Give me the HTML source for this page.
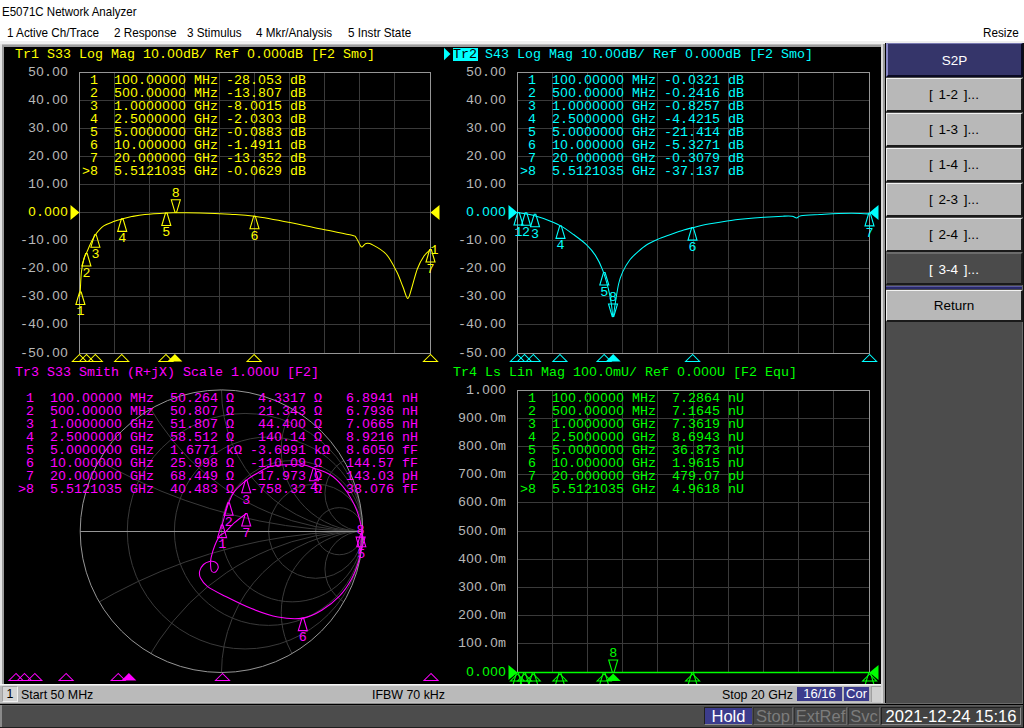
<!DOCTYPE html>
<html><head><meta charset="utf-8"><style>
*{margin:0;padding:0;box-sizing:border-box}
html,body{width:1024px;height:728px;overflow:hidden;background:#ffffff;position:relative;font-family:'Liberation Sans',sans-serif}
.abs{position:absolute}
.ui{position:absolute;white-space:pre;color:#000;transform-origin:0 0}
#chart{left:4px;top:47px;width:877px;height:637px;background:#000}
#svg{position:absolute;left:0;top:0}
svg text{font-family:'Liberation Mono',monospace;font-size:13.33px;}
.btn{position:absolute;left:886px;width:137px;text-align:center;font-size:13.5px;word-spacing:2px}
.btn.nav{background:#35356a;color:#fff;border-top:1px solid #7878b0;border-left:2px solid #8888c8;border-bottom:2px solid #0a0a22;border-right:2px solid #0a0a22}
.btn.lt{background:#b8b8b8;color:#000;border-top:1px solid #f2f2f2;border-left:1px solid #f2f2f2;border-bottom:2px solid #1a1a1a;border-right:2px solid #1a1a1a}
.btn.dk{background:#4b4b4b;color:#fff;border-top:2px solid #6c6c6c;border-left:1px solid #6c6c6c;border-bottom:2px solid #1a1a1a;border-right:2px solid #1a1a1a}
.sb{position:absolute;font-size:12.4px;color:#000;white-space:pre;line-height:14px}
.box{position:absolute;text-align:center;color:#fff;white-space:pre}
</style></head><body>
<div class="ui" style="left:2px;top:5px;font-size:12.4px;transform:scaleX(0.93)">E5071C Network Analyzer</div>
<div class="ui" style="left:7px;top:26px;font-size:12.6px;transform:scaleX(0.93)">1 Active Ch/Trace</div>
<div class="ui" style="left:114px;top:26px;font-size:12.6px;transform:scaleX(0.93)">2 Response</div>
<div class="ui" style="left:187px;top:26px;font-size:12.6px;transform:scaleX(0.93)">3 Stimulus</div>
<div class="ui" style="left:256px;top:26px;font-size:12.6px;transform:scaleX(0.93)">4 Mkr/Analysis</div>
<div class="ui" style="left:348px;top:26px;font-size:12.6px;transform:scaleX(0.93)">5 Instr State</div>
<div class="ui" style="left:983px;top:26px;font-size:12.6px;transform:scaleX(0.93)">Resize</div>
<div class="abs" style="left:0px;top:41px;width:1024px;height:3px;background:#efefef;"></div><div class="abs" style="left:0px;top:44px;width:886px;height:1px;background:#bdbdbd;"></div><div class="abs" style="left:0px;top:45px;width:886px;height:2px;background:#9c9c9c;"></div><div class="abs" style="left:0px;top:44px;width:2px;height:641px;background:#e4e4e4;"></div><div class="abs" style="left:2px;top:45px;width:2px;height:639px;background:#9c9c9c;"></div><div class="abs" style="left:881px;top:44px;width:2px;height:660px;background:#d8d8d8;"></div><div class="abs" style="left:883px;top:44px;width:2px;height:660px;background:#9a9a9a;"></div><div class="abs" style="left:885px;top:43px;width:1px;height:661px;background:#000000;"></div>
<div id="chart" class="abs"></div>
<svg id="svg" width="1024" height="728" viewBox="0 0 1024 728">
<defs><clipPath id="cc"><rect x="4" y="47" width="877" height="637"/></clipPath></defs>
<g clip-path="url(#cc)">
<path d="M114.5 72.5V353.5M149.5 72.5V353.5M184.5 72.5V353.5M219.5 72.5V353.5M254.5 72.5V353.5M289.5 72.5V353.5M324.5 72.5V353.5M359.5 72.5V353.5M394.5 72.5V353.5M79.5 100.5H430.5M79.5 128.5H430.5M79.5 156.5H430.5M79.5 184.5H430.5M79.5 212.5H430.5M79.5 240.5H430.5M79.5 268.5H430.5M79.5 296.5H430.5M79.5 324.5H430.5" stroke="#3a3a3a" stroke-width="1" fill="none"/>
<rect x="79.5" y="72.5" width="351" height="281" stroke="#969696" fill="none"/>
<text x="15" y="58" fill="#ffff00" text-anchor="start" xml:space="preserve">Tr1 S33 Log Mag 10.00dB/ Ref 0.000dB [F2 Smo]</text>
<text x="68" y="76.0" fill="#b8b8b8" text-anchor="end" >50.00</text>
<text x="68" y="104.0" fill="#b8b8b8" text-anchor="end" >40.00</text>
<text x="68" y="132.0" fill="#b8b8b8" text-anchor="end" >30.00</text>
<text x="68" y="160.0" fill="#b8b8b8" text-anchor="end" >20.00</text>
<text x="68" y="188.0" fill="#b8b8b8" text-anchor="end" >10.00</text>
<text x="68" y="216.0" fill="#ffff00" text-anchor="end" >0.000</text>
<text x="68" y="244.0" fill="#b8b8b8" text-anchor="end" >-10.00</text>
<text x="68" y="272.0" fill="#b8b8b8" text-anchor="end" >-20.00</text>
<text x="68" y="300.0" fill="#b8b8b8" text-anchor="end" >-30.00</text>
<text x="68" y="328.0" fill="#b8b8b8" text-anchor="end" >-40.00</text>
<text x="68" y="357.0" fill="#b8b8b8" text-anchor="end" >-50.00</text>
<path d="M70.5 205.0L79.5 212.5L70.5 220.0Z" fill="#ffff00"/>
<path d="M439.5 205.0L430.5 212.5L439.5 220.0Z" fill="#ffff00"/>
<text x="82" y="84" fill="#ffff00" text-anchor="start" xml:space="preserve"> 1  100.00000 MHz -28.053 dB</text>
<text x="82" y="97" fill="#ffff00" text-anchor="start" xml:space="preserve"> 2  500.00000 MHz -13.807 dB</text>
<text x="82" y="110" fill="#ffff00" text-anchor="start" xml:space="preserve"> 3  1.0000000 GHz -8.0015 dB</text>
<text x="82" y="123" fill="#ffff00" text-anchor="start" xml:space="preserve"> 4  2.5000000 GHz -2.0303 dB</text>
<text x="82" y="136" fill="#ffff00" text-anchor="start" xml:space="preserve"> 5  5.0000000 GHz -0.0883 dB</text>
<text x="82" y="149" fill="#ffff00" text-anchor="start" xml:space="preserve"> 6  10.000000 GHz -1.4911 dB</text>
<text x="82" y="162" fill="#ffff00" text-anchor="start" xml:space="preserve"> 7  20.000000 GHz -13.352 dB</text>
<text x="82" y="175" fill="#ffff00" text-anchor="start" xml:space="preserve">&gt;8  5.5121035 GHz -0.0629 dB</text>
<path d="M79.50 296.00C79.62 295.33 79.88 296.00 80.20 292.00C80.52 288.00 80.78 277.55 81.40 272.00C82.02 266.45 83.07 261.83 83.90 258.70C84.73 255.57 85.30 255.68 86.40 253.20C87.50 250.72 89.00 246.88 90.50 243.80C92.00 240.72 93.20 237.68 95.40 234.70C97.60 231.72 100.53 228.13 103.70 225.90C106.87 223.67 111.32 222.47 114.40 221.30C117.48 220.13 119.32 219.68 122.20 218.90C125.08 218.12 127.92 217.33 131.70 216.60C135.48 215.87 139.13 215.10 144.90 214.50C150.67 213.90 161.08 213.28 166.30 213.00C171.52 212.72 170.58 212.82 176.20 212.80C181.82 212.78 191.03 212.67 200.00 212.90C208.97 213.13 220.92 213.65 230.00 214.20C239.08 214.75 244.50 214.82 254.50 216.20C264.50 217.58 278.50 220.27 290.00 222.50C301.50 224.73 313.17 227.47 323.50 229.60C333.83 231.73 346.58 233.98 352.00 235.30C357.42 236.62 354.67 235.88 356.00 237.50C357.33 239.12 359.00 243.42 360.00 245.00C361.00 246.58 361.00 247.25 362.00 247.00C363.00 246.75 364.33 243.92 366.00 243.50C367.67 243.08 368.67 242.75 372.00 244.50C375.33 246.25 381.92 249.53 386.00 254.00C390.08 258.47 393.67 265.80 396.50 271.30C399.33 276.80 401.12 282.47 403.00 287.00C404.88 291.53 406.30 298.50 407.80 298.50C409.30 298.50 410.40 291.97 412.00 287.00C413.60 282.03 415.40 273.87 417.40 268.70C419.40 263.53 421.82 259.20 424.00 256.00C426.18 252.80 429.42 250.58 430.50 249.50" stroke="#ffff00" fill="none" stroke-width="1.05"/>
<path d="M79.6 292.0H81.2L84.9 304.5H75.9Z" stroke="#ffff00" fill="none" stroke-width="1.1"/>
<text x="80.4" y="315.3" fill="#ffff00" text-anchor="middle" >1</text>
<path d="M85.6 253.5H87.2L90.9 266.0H81.9Z" stroke="#ffff00" fill="none" stroke-width="1.1"/>
<text x="86.4" y="276.8" fill="#ffff00" text-anchor="middle" >2</text>
<path d="M94.6 234.7H96.2L99.9 247.2H90.9Z" stroke="#ffff00" fill="none" stroke-width="1.1"/>
<text x="95.4" y="258.0" fill="#ffff00" text-anchor="middle" >3</text>
<path d="M121.4 218.9H123.0L126.7 231.4H117.7Z" stroke="#ffff00" fill="none" stroke-width="1.1"/>
<text x="122.2" y="242.20000000000002" fill="#ffff00" text-anchor="middle" >4</text>
<path d="M165.5 213.0H167.1L170.8 225.5H161.8Z" stroke="#ffff00" fill="none" stroke-width="1.1"/>
<text x="166.3" y="236.3" fill="#ffff00" text-anchor="middle" >5</text>
<path d="M253.7 216.2H255.3L259.0 228.7H250.0Z" stroke="#ffff00" fill="none" stroke-width="1.1"/>
<text x="254.5" y="239.5" fill="#ffff00" text-anchor="middle" >6</text>
<path d="M429.7 249.5H431.3L435.0 262.0H426.0Z" stroke="#ffff00" fill="none" stroke-width="1.1"/>
<text x="430.5" y="272.8" fill="#ffff00" text-anchor="middle" >7</text>
<path d="M175.0 212.3H176.6L180.3 199.8H171.3Z" stroke="#ffff00" fill="none" stroke-width="1.1"/>
<text x="175.8" y="196.8" fill="#ffff00" text-anchor="middle" >8</text>
<text x="434.5" y="254" fill="#ffff00" text-anchor="middle" >1</text>
<path d="M79.4 354.5L72.4 361.5H86.4Z" stroke="#ffff00" fill="none" stroke-width="1.05"/>
<path d="M86.5 354.5L79.5 361.5H93.5Z" stroke="#ffff00" fill="none" stroke-width="1.05"/>
<path d="M95.3 354.5L88.3 361.5H102.3Z" stroke="#ffff00" fill="none" stroke-width="1.05"/>
<path d="M121.7 354.5L114.7 361.5H128.7Z" stroke="#ffff00" fill="none" stroke-width="1.05"/>
<path d="M165.9 354.5L158.9 361.5H172.9Z" stroke="#ffff00" fill="none" stroke-width="1.05"/>
<path d="M254.1 354.5L247.1 361.5H261.1Z" stroke="#ffff00" fill="none" stroke-width="1.05"/>
<path d="M430.5 354.5L423.5 361.5H437.5Z" stroke="#ffff00" fill="none" stroke-width="1.05"/>
<path d="M174.9 354.0L167.4 361.5H182.4Z" fill="#ffff00"/>
<path d="M552.5 72.5V353.5M587.5 72.5V353.5M622.5 72.5V353.5M657.5 72.5V353.5M693.5 72.5V353.5M728.5 72.5V353.5M763.5 72.5V353.5M798.5 72.5V353.5M833.5 72.5V353.5M517.5 100.5H869.5M517.5 128.5H869.5M517.5 156.5H869.5M517.5 184.5H869.5M517.5 212.5H869.5M517.5 240.5H869.5M517.5 268.5H869.5M517.5 296.5H869.5M517.5 324.5H869.5" stroke="#3a3a3a" stroke-width="1" fill="none"/>
<rect x="517.5" y="72.5" width="352" height="281" stroke="#969696" fill="none"/>
<path d="M444 47.8L450.5 54L444 60.2Z" fill="#00ffff"/>
<rect x="453" y="48" width="25" height="13" fill="#00ffff"/>
<text x="453" y="58" fill="#000000" text-anchor="start" >Tr2</text>
<text x="485" y="58" fill="#00ffff" text-anchor="start" xml:space="preserve">S43 Log Mag 10.00dB/ Ref 0.000dB [F2 Smo]</text>
<text x="506" y="76.0" fill="#b8b8b8" text-anchor="end" >50.00</text>
<text x="506" y="104.0" fill="#b8b8b8" text-anchor="end" >40.00</text>
<text x="506" y="132.0" fill="#b8b8b8" text-anchor="end" >30.00</text>
<text x="506" y="160.0" fill="#b8b8b8" text-anchor="end" >20.00</text>
<text x="506" y="188.0" fill="#b8b8b8" text-anchor="end" >10.00</text>
<text x="506" y="216.0" fill="#00ffff" text-anchor="end" >0.000</text>
<text x="506" y="244.0" fill="#b8b8b8" text-anchor="end" >-10.00</text>
<text x="506" y="272.0" fill="#b8b8b8" text-anchor="end" >-20.00</text>
<text x="506" y="300.0" fill="#b8b8b8" text-anchor="end" >-30.00</text>
<text x="506" y="328.0" fill="#b8b8b8" text-anchor="end" >-40.00</text>
<text x="506" y="357.0" fill="#b8b8b8" text-anchor="end" >-50.00</text>
<path d="M508.5 205.0L517.5 212.5L508.5 220.0Z" fill="#00ffff"/>
<path d="M878.5 205.0L869.5 212.5L878.5 220.0Z" fill="#00ffff"/>
<text x="520" y="84" fill="#00ffff" text-anchor="start" xml:space="preserve"> 1  100.00000 MHz -0.0321 dB</text>
<text x="520" y="97" fill="#00ffff" text-anchor="start" xml:space="preserve"> 2  500.00000 MHz -0.2416 dB</text>
<text x="520" y="110" fill="#00ffff" text-anchor="start" xml:space="preserve"> 3  1.0000000 GHz -0.8257 dB</text>
<text x="520" y="123" fill="#00ffff" text-anchor="start" xml:space="preserve"> 4  2.5000000 GHz -4.4215 dB</text>
<text x="520" y="136" fill="#00ffff" text-anchor="start" xml:space="preserve"> 5  5.0000000 GHz -21.414 dB</text>
<text x="520" y="149" fill="#00ffff" text-anchor="start" xml:space="preserve"> 6  10.000000 GHz -5.3271 dB</text>
<text x="520" y="162" fill="#00ffff" text-anchor="start" xml:space="preserve"> 7  20.000000 GHz -0.3079 dB</text>
<text x="520" y="175" fill="#00ffff" text-anchor="start" xml:space="preserve">&gt;8  5.5121035 GHz -37.137 dB</text>
<path d="M517.50 212.50C520.07 212.95 528.55 214.18 532.90 215.20C537.25 216.22 539.00 216.82 543.60 218.60C548.20 220.38 555.45 223.20 560.50 225.90C565.55 228.60 569.58 231.68 573.90 234.80C578.22 237.92 582.82 241.17 586.40 244.60C589.98 248.03 592.72 251.23 595.40 255.40C598.08 259.57 600.32 263.95 602.50 269.60C604.68 275.25 607.00 283.40 608.50 289.30C610.00 295.20 610.75 300.38 611.50 305.00C612.25 309.62 612.42 317.00 613.00 317.00C613.58 317.00 614.07 310.50 615.00 305.00C615.93 299.50 617.32 289.52 618.60 284.00C619.88 278.48 620.82 275.93 622.70 271.90C624.58 267.87 627.42 263.10 629.90 259.80C632.38 256.50 634.85 254.57 637.60 252.10C640.35 249.63 643.10 247.10 646.40 245.00C649.70 242.90 653.38 241.23 657.40 239.50C661.42 237.77 666.12 236.18 670.50 234.60C674.88 233.02 680.03 231.15 683.70 230.00C687.37 228.85 688.35 228.68 692.50 227.70C696.65 226.72 702.83 225.23 708.60 224.10C714.37 222.97 720.92 221.80 727.10 220.90C733.28 220.00 739.52 219.32 745.70 218.70C751.88 218.08 758.02 217.62 764.20 217.20C770.38 216.78 778.17 216.37 782.80 216.20C787.43 216.03 789.68 215.90 792.00 216.20C794.32 216.50 795.20 218.07 796.70 218.00C798.20 217.93 797.13 216.38 801.00 215.80C804.87 215.22 813.67 214.88 819.90 214.50C826.13 214.12 831.60 213.68 838.40 213.50C845.20 213.32 855.52 213.32 860.70 213.40C865.88 213.48 868.03 213.90 869.50 214.00" stroke="#00ffff" fill="none" stroke-width="1.05"/>
<path d="M517.7 212.5H519.3L523.0 225.0H514.0Z" stroke="#00ffff" fill="none" stroke-width="1.1"/>
<text x="518.5" y="235.8" fill="#00ffff" text-anchor="middle" >1</text>
<path d="M525.2 212.8H526.8L530.5 225.3H521.5Z" stroke="#00ffff" fill="none" stroke-width="1.1"/>
<text x="526" y="236.10000000000002" fill="#00ffff" text-anchor="middle" >2</text>
<path d="M534.2 214.3H535.8L539.5 226.8H530.5Z" stroke="#00ffff" fill="none" stroke-width="1.1"/>
<text x="535" y="237.60000000000002" fill="#00ffff" text-anchor="middle" >3</text>
<path d="M559.7 225.9H561.3L565.0 238.4H556.0Z" stroke="#00ffff" fill="none" stroke-width="1.1"/>
<text x="560.5" y="249.20000000000002" fill="#00ffff" text-anchor="middle" >4</text>
<path d="M603.5 272.5H605.1L608.8 285.0H599.8Z" stroke="#00ffff" fill="none" stroke-width="1.1"/>
<text x="604.3" y="295.8" fill="#00ffff" text-anchor="middle" >5</text>
<path d="M691.7 227.6H693.3L697.0 240.1H688.0Z" stroke="#00ffff" fill="none" stroke-width="1.1"/>
<text x="692.5" y="250.9" fill="#00ffff" text-anchor="middle" >6</text>
<path d="M868.7 213.4H870.3L874.0 225.9H865.0Z" stroke="#00ffff" fill="none" stroke-width="1.1"/>
<text x="869.5" y="236.70000000000002" fill="#00ffff" text-anchor="middle" >7</text>
<path d="M612.2 316.5H613.8L617.5 304.0H608.5Z" stroke="#00ffff" fill="none" stroke-width="1.1"/>
<text x="613" y="301.0" fill="#00ffff" text-anchor="middle" >8</text>
<path d="M517.4 354.5L510.4 361.5H524.4Z" stroke="#00ffff" fill="none" stroke-width="1.05"/>
<path d="M524.5 354.5L517.5 361.5H531.5Z" stroke="#00ffff" fill="none" stroke-width="1.05"/>
<path d="M533.3 354.5L526.3 361.5H540.3Z" stroke="#00ffff" fill="none" stroke-width="1.05"/>
<path d="M559.9 354.5L552.9 361.5H566.9Z" stroke="#00ffff" fill="none" stroke-width="1.05"/>
<path d="M604.1 354.5L597.1 361.5H611.1Z" stroke="#00ffff" fill="none" stroke-width="1.05"/>
<path d="M692.6 354.5L685.6 361.5H699.6Z" stroke="#00ffff" fill="none" stroke-width="1.05"/>
<path d="M869.6 354.5L862.6 361.5H876.6Z" stroke="#00ffff" fill="none" stroke-width="1.05"/>
<path d="M613.2 354.0L605.7 361.5H620.7Z" fill="#00ffff"/>
<text x="15" y="376" fill="#ff00ff" text-anchor="start" xml:space="preserve">Tr3 S33 Smith (R+jX) Scale 1.000U [F2]</text>
<defs><clipPath id="uc"><circle cx="221.5" cy="531.2" r="141.3"/></clipPath></defs>
<g clip-path="url(#uc)" stroke="#3a3a3a" fill="none" stroke-width="1"><circle cx="245.05" cy="531.2" r="117.75"/><circle cx="268.60" cy="531.2" r="94.20"/><circle cx="292.15" cy="531.2" r="70.65"/><circle cx="315.70" cy="531.2" r="47.10"/><circle cx="339.25" cy="531.2" r="23.55"/><circle cx="362.80" cy="3.86" r="527.34"/><circle cx="362.80" cy="1058.54" r="527.34"/><circle cx="362.80" cy="286.46" r="244.74"/><circle cx="362.80" cy="775.94" r="244.74"/><circle cx="362.80" cy="389.90" r="141.30"/><circle cx="362.80" cy="672.50" r="141.30"/><circle cx="362.80" cy="449.62" r="81.58"/><circle cx="362.80" cy="612.78" r="81.58"/><circle cx="362.80" cy="493.34" r="37.86"/><circle cx="362.80" cy="569.06" r="37.86"/></g>
<circle cx="221.5" cy="531.2" r="141.3" stroke="#969696" fill="none"/>
<path d="M80.19999999999999 531.5H362.8" stroke="#969696"/>
<text x="18" y="402" fill="#ff00ff" text-anchor="start" xml:space="preserve"> 1  100.00000 MHz  50.264 Ω   4.3317 Ω   6.8941 nH</text>
<text x="18" y="415" fill="#ff00ff" text-anchor="start" xml:space="preserve"> 2  500.00000 MHz  50.807 Ω   21.343 Ω   6.7936 nH</text>
<text x="18" y="428" fill="#ff00ff" text-anchor="start" xml:space="preserve"> 3  1.0000000 GHz  51.807 Ω   44.400 Ω   7.0665 nH</text>
<text x="18" y="441" fill="#ff00ff" text-anchor="start" xml:space="preserve"> 4  2.5000000 GHz  58.512 Ω   140.14 Ω   8.9216 nH</text>
<text x="18" y="454" fill="#ff00ff" text-anchor="start" xml:space="preserve"> 5  5.0000000 GHz  1.6771 kΩ -3.6991 kΩ  8.6050 fF</text>
<text x="18" y="467" fill="#ff00ff" text-anchor="start" xml:space="preserve"> 6  10.000000 GHz  25.998 Ω  -110.09 Ω   144.57 fF</text>
<text x="18" y="480" fill="#ff00ff" text-anchor="start" xml:space="preserve"> 7  20.000000 GHz  68.449 Ω   17.973 Ω   143.03 pH</text>
<text x="18" y="493" fill="#ff00ff" text-anchor="start" xml:space="preserve">&gt;8  5.5121035 GHz  40.483 Ω  -758.32 Ω   38.076 fF</text>
<path d="M222.20 529.00C222.19 528.35 221.73 527.26 222.13 525.12C222.53 522.99 223.51 519.92 224.60 516.20C225.69 512.48 226.99 506.93 228.64 502.80C230.29 498.66 231.58 495.14 234.50 491.40C237.42 487.66 242.25 483.46 246.19 480.34C250.12 477.23 254.10 474.99 258.10 472.70C262.10 470.41 265.65 467.93 270.20 466.60C274.75 465.27 279.85 464.95 285.40 464.70C290.95 464.45 298.73 464.52 303.50 465.10C308.27 465.68 309.46 466.52 313.99 468.17C318.52 469.82 325.90 471.98 330.70 475.00C335.50 478.02 339.27 482.15 342.80 486.30C346.33 490.45 349.38 495.37 351.90 499.90C354.42 504.43 356.38 509.22 357.90 513.50C359.42 517.78 360.43 522.13 361.00 525.60C361.57 529.07 361.40 530.34 361.34 534.34C361.27 538.33 361.05 545.11 360.61 549.57C360.17 554.03 360.18 556.25 358.70 561.10C357.22 565.95 354.92 572.85 351.70 578.70C348.48 584.55 344.38 590.93 339.40 596.20C334.42 601.47 327.90 606.65 321.80 610.30C315.70 613.95 310.11 617.01 302.79 618.13C295.48 619.24 286.45 618.59 277.90 617.00C269.35 615.41 260.28 612.07 251.50 608.60C242.72 605.13 232.52 599.87 225.20 596.20C217.88 592.53 211.72 589.63 207.60 586.60C203.48 583.57 201.82 580.60 200.50 578.00C199.18 575.40 199.20 573.25 199.70 571.00C200.20 568.75 201.87 566.08 203.50 564.50C205.13 562.92 207.50 561.87 209.50 561.50C211.50 561.13 214.03 561.38 215.50 562.30C216.97 563.22 218.30 565.38 218.30 567.00C218.30 568.62 216.63 571.33 215.50 572.00C214.37 572.67 212.32 572.17 211.50 571.00C210.68 569.83 210.67 567.23 210.60 565.00C210.53 562.77 210.42 560.80 211.10 557.60C211.78 554.40 213.27 549.42 214.70 545.80C216.13 542.18 217.92 538.23 219.70 535.90C221.48 533.57 222.93 534.00 225.40 531.80C227.87 529.60 231.03 525.75 234.50 522.70C237.97 519.65 244.24 515.04 246.19 513.51" stroke="#ff00ff" fill="none" stroke-width="1.05"/>
<path d="M221.3 525.1H222.9L226.6 537.6H217.6Z" stroke="#ff00ff" fill="none" stroke-width="1.1"/>
<text x="222.13460096670718" y="548.4228406108622" fill="#ff00ff" text-anchor="middle" >1</text>
<path d="M227.8 502.8H229.4L233.1 515.3H224.1Z" stroke="#ff00ff" fill="none" stroke-width="1.1"/>
<text x="228.6447975471018" y="526.0964716145486" fill="#ff00ff" text-anchor="middle" >2</text>
<path d="M245.4 480.3H247.0L250.7 492.8H241.7Z" stroke="#ff00ff" fill="none" stroke-width="1.1"/>
<text x="246.18764869854556" y="503.64310020151294" fill="#ff00ff" text-anchor="middle" >3</text>
<path d="M313.2 468.2H314.8L318.5 480.7H309.5Z" stroke="#ff00ff" fill="none" stroke-width="1.1"/>
<text x="313.99147639064637" y="491.46525270371194" fill="#ff00ff" text-anchor="middle" >4</text>
<path d="M360.5 534.3H362.1L365.8 546.8H356.8Z" stroke="#ff00ff" fill="none" stroke-width="1.1"/>
<text x="361.3357249574748" y="557.6361819291327" fill="#ff00ff" text-anchor="middle" >5</text>
<path d="M302.0 618.1H303.6L307.3 630.6H298.3Z" stroke="#ff00ff" fill="none" stroke-width="1.1"/>
<text x="302.7932109339142" y="641.4252797216425" fill="#ff00ff" text-anchor="middle" >6</text>
<path d="M245.4 513.5H247.0L250.7 526.0H241.7Z" stroke="#ff00ff" fill="none" stroke-width="1.1"/>
<text x="246.19289976017484" y="536.8064828524481" fill="#ff00ff" text-anchor="middle" >7</text>
<path d="M359.8 549.6H361.4L365.1 537.1H356.1Z" stroke="#ff00ff" fill="none" stroke-width="1.1"/>
<text x="360.60787893305314" y="534.0717300209667" fill="#ff00ff" text-anchor="middle" >8</text>
<path d="M16.0 673.5L9.0 680.5H23.0Z" stroke="#ff00ff" fill="none" stroke-width="1.05"/>
<path d="M24.4 673.5L17.4 680.5H31.4Z" stroke="#ff00ff" fill="none" stroke-width="1.05"/>
<path d="M34.8 673.5L27.8 680.5H41.8Z" stroke="#ff00ff" fill="none" stroke-width="1.05"/>
<path d="M66.1 673.5L59.1 680.5H73.1Z" stroke="#ff00ff" fill="none" stroke-width="1.05"/>
<path d="M118.2 673.5L111.2 680.5H125.2Z" stroke="#ff00ff" fill="none" stroke-width="1.05"/>
<path d="M222.5 673.5L215.5 680.5H229.5Z" stroke="#ff00ff" fill="none" stroke-width="1.05"/>
<path d="M431.0 673.5L424.0 680.5H438.0Z" stroke="#ff00ff" fill="none" stroke-width="1.05"/>
<path d="M128.9 673.0L121.4 680.5H136.4Z" fill="#ff00ff"/>
<path d="M552.5 390.5V672.5M587.5 390.5V672.5M622.5 390.5V672.5M657.5 390.5V672.5M693.5 390.5V672.5M728.5 390.5V672.5M763.5 390.5V672.5M798.5 390.5V672.5M833.5 390.5V672.5M517.5 418.5H869.5M517.5 446.5H869.5M517.5 474.5H869.5M517.5 502.5H869.5M517.5 531.5H869.5M517.5 559.5H869.5M517.5 587.5H869.5M517.5 615.5H869.5M517.5 643.5H869.5" stroke="#3a3a3a" stroke-width="1" fill="none"/>
<rect x="517.5" y="390.5" width="352" height="282" stroke="#969696" fill="none"/>
<text x="453" y="376" fill="#00ff00" text-anchor="start" xml:space="preserve">Tr4 Ls Lin Mag 100.0mU/ Ref 0.000U [F2 Equ]</text>
<text x="506" y="394.0" fill="#b8b8b8" text-anchor="end" >1.000</text>
<text x="506" y="422.0" fill="#b8b8b8" text-anchor="end" >900.0m</text>
<text x="506" y="450.0" fill="#b8b8b8" text-anchor="end" >800.0m</text>
<text x="506" y="478.0" fill="#b8b8b8" text-anchor="end" >700.0m</text>
<text x="506" y="506.0" fill="#b8b8b8" text-anchor="end" >600.0m</text>
<text x="506" y="535.0" fill="#b8b8b8" text-anchor="end" >500.0m</text>
<text x="506" y="563.0" fill="#b8b8b8" text-anchor="end" >400.0m</text>
<text x="506" y="591.0" fill="#b8b8b8" text-anchor="end" >300.0m</text>
<text x="506" y="619.0" fill="#b8b8b8" text-anchor="end" >200.0m</text>
<text x="506" y="647.0" fill="#b8b8b8" text-anchor="end" >100.0m</text>
<text x="506" y="676.0" fill="#00ff00" text-anchor="end" >0.000</text>
<path d="M508.5 665.0L517.5 672.5L508.5 680.0Z" fill="#00ff00"/>
<path d="M878.5 665.0L869.5 672.5L878.5 680.0Z" fill="#00ff00"/>
<text x="520" y="402" fill="#00ff00" text-anchor="start" xml:space="preserve"> 1  100.00000 MHz  7.2864 nU</text>
<text x="520" y="415" fill="#00ff00" text-anchor="start" xml:space="preserve"> 2  500.00000 MHz  7.1645 nU</text>
<text x="520" y="428" fill="#00ff00" text-anchor="start" xml:space="preserve"> 3  1.0000000 GHz  7.3619 nU</text>
<text x="520" y="441" fill="#00ff00" text-anchor="start" xml:space="preserve"> 4  2.5000000 GHz  8.6943 nU</text>
<text x="520" y="454" fill="#00ff00" text-anchor="start" xml:space="preserve"> 5  5.0000000 GHz  36.873 nU</text>
<text x="520" y="467" fill="#00ff00" text-anchor="start" xml:space="preserve"> 6  10.000000 GHz  1.9615 nU</text>
<text x="520" y="480" fill="#00ff00" text-anchor="start" xml:space="preserve"> 7  20.000000 GHz  479.07 pU</text>
<text x="520" y="493" fill="#00ff00" text-anchor="start" xml:space="preserve">&gt;8  5.5121035 GHz  4.9618 nU</text>
<path d="M517.5 672.5H869.5" stroke="#00ff00" stroke-width="1.3"/>
<path d="M516.6 672.5H518.2L521.9 685.0H512.9Z" stroke="#00ff00" fill="none" stroke-width="1.1"/>
<path d="M517.4 674.0L510.4 681.0H524.4Z" stroke="#00ff00" fill="none" stroke-width="1.05"/>
<path d="M523.7 672.5H525.3L529.0 685.0H520.0Z" stroke="#00ff00" fill="none" stroke-width="1.1"/>
<path d="M524.5 674.0L517.5 681.0H531.5Z" stroke="#00ff00" fill="none" stroke-width="1.05"/>
<path d="M532.5 672.5H534.1L537.8 685.0H528.8Z" stroke="#00ff00" fill="none" stroke-width="1.1"/>
<path d="M533.3 674.0L526.3 681.0H540.3Z" stroke="#00ff00" fill="none" stroke-width="1.05"/>
<path d="M559.1 672.5H560.7L564.4 685.0H555.4Z" stroke="#00ff00" fill="none" stroke-width="1.1"/>
<path d="M559.9 674.0L552.9 681.0H566.9Z" stroke="#00ff00" fill="none" stroke-width="1.05"/>
<path d="M603.3 672.5H604.9L608.6 685.0H599.6Z" stroke="#00ff00" fill="none" stroke-width="1.1"/>
<path d="M604.1 674.0L597.1 681.0H611.1Z" stroke="#00ff00" fill="none" stroke-width="1.05"/>
<path d="M691.8 672.5H693.4L697.1 685.0H688.1Z" stroke="#00ff00" fill="none" stroke-width="1.1"/>
<path d="M692.6 674.0L685.6 681.0H699.6Z" stroke="#00ff00" fill="none" stroke-width="1.05"/>
<path d="M868.8 672.5H870.4L874.1 685.0H865.1Z" stroke="#00ff00" fill="none" stroke-width="1.1"/>
<path d="M869.6 674.0L862.6 681.0H876.6Z" stroke="#00ff00" fill="none" stroke-width="1.05"/>
<path d="M612.4 672.5H614.0L617.7 660.0H608.7Z" stroke="#00ff00" fill="none" stroke-width="1.1"/>
<text x="613.19423195" y="657.0" fill="#00ff00" text-anchor="middle" >8</text>
<path d="M613.2 673.5L605.7 681.0H620.7Z" fill="#00ff00"/>
<path d="M154.00 53h2v2h-2zM170.00 53h2v2h-2zM178.00 53h2v2h-2zM250.00 53h2v2h-2zM266.00 53h2v2h-2zM274.00 53h2v2h-2zM282.00 53h2v2h-2zM39.00 71.0h2v2h-2zM55.00 71.0h2v2h-2zM63.00 71.0h2v2h-2zM39.00 99.0h2v2h-2zM55.00 99.0h2v2h-2zM63.00 99.0h2v2h-2zM39.00 127.0h2v2h-2zM55.00 127.0h2v2h-2zM63.00 127.0h2v2h-2zM39.00 155.0h2v2h-2zM55.00 155.0h2v2h-2zM63.00 155.0h2v2h-2zM39.00 183.0h2v2h-2zM55.00 183.0h2v2h-2zM63.00 183.0h2v2h-2zM31.00 211.0h2v2h-2zM47.00 211.0h2v2h-2zM55.00 211.0h2v2h-2zM63.00 211.0h2v2h-2zM39.00 239.0h2v2h-2zM55.00 239.0h2v2h-2zM63.00 239.0h2v2h-2zM39.00 267.0h2v2h-2zM55.00 267.0h2v2h-2zM63.00 267.0h2v2h-2zM39.00 295.0h2v2h-2zM55.00 295.0h2v2h-2zM63.00 295.0h2v2h-2zM39.00 323.0h2v2h-2zM55.00 323.0h2v2h-2zM63.00 323.0h2v2h-2zM39.00 352.0h2v2h-2zM55.00 352.0h2v2h-2zM63.00 352.0h2v2h-2zM125.00 79h2v2h-2zM133.00 79h2v2h-2zM149.00 79h2v2h-2zM157.00 79h2v2h-2zM165.00 79h2v2h-2zM173.00 79h2v2h-2zM181.00 79h2v2h-2zM261.00 79h2v2h-2zM125.00 92h2v2h-2zM133.00 92h2v2h-2zM149.00 92h2v2h-2zM157.00 92h2v2h-2zM165.00 92h2v2h-2zM173.00 92h2v2h-2zM181.00 92h2v2h-2zM269.00 92h2v2h-2zM133.00 105h2v2h-2zM141.00 105h2v2h-2zM149.00 105h2v2h-2zM157.00 105h2v2h-2zM165.00 105h2v2h-2zM173.00 105h2v2h-2zM181.00 105h2v2h-2zM253.00 105h2v2h-2zM261.00 105h2v2h-2zM141.00 118h2v2h-2zM149.00 118h2v2h-2zM157.00 118h2v2h-2zM165.00 118h2v2h-2zM173.00 118h2v2h-2zM181.00 118h2v2h-2zM253.00 118h2v2h-2zM269.00 118h2v2h-2zM133.00 131h2v2h-2zM141.00 131h2v2h-2zM149.00 131h2v2h-2zM157.00 131h2v2h-2zM165.00 131h2v2h-2zM173.00 131h2v2h-2zM181.00 131h2v2h-2zM237.00 131h2v2h-2zM253.00 131h2v2h-2zM125.00 144h2v2h-2zM141.00 144h2v2h-2zM149.00 144h2v2h-2zM157.00 144h2v2h-2zM165.00 144h2v2h-2zM173.00 144h2v2h-2zM181.00 144h2v2h-2zM125.00 157h2v2h-2zM141.00 157h2v2h-2zM149.00 157h2v2h-2zM157.00 157h2v2h-2zM165.00 157h2v2h-2zM173.00 157h2v2h-2zM181.00 157h2v2h-2zM165.00 170h2v2h-2zM237.00 170h2v2h-2zM253.00 170h2v2h-2zM592.00 53h2v2h-2zM608.00 53h2v2h-2zM616.00 53h2v2h-2zM688.00 53h2v2h-2zM704.00 53h2v2h-2zM712.00 53h2v2h-2zM720.00 53h2v2h-2zM477.00 71.0h2v2h-2zM493.00 71.0h2v2h-2zM501.00 71.0h2v2h-2zM477.00 99.0h2v2h-2zM493.00 99.0h2v2h-2zM501.00 99.0h2v2h-2zM477.00 127.0h2v2h-2zM493.00 127.0h2v2h-2zM501.00 127.0h2v2h-2zM477.00 155.0h2v2h-2zM493.00 155.0h2v2h-2zM501.00 155.0h2v2h-2zM477.00 183.0h2v2h-2zM493.00 183.0h2v2h-2zM501.00 183.0h2v2h-2zM469.00 211.0h2v2h-2zM485.00 211.0h2v2h-2zM493.00 211.0h2v2h-2zM501.00 211.0h2v2h-2zM477.00 239.0h2v2h-2zM493.00 239.0h2v2h-2zM501.00 239.0h2v2h-2zM477.00 267.0h2v2h-2zM493.00 267.0h2v2h-2zM501.00 267.0h2v2h-2zM477.00 295.0h2v2h-2zM493.00 295.0h2v2h-2zM501.00 295.0h2v2h-2zM477.00 323.0h2v2h-2zM493.00 323.0h2v2h-2zM501.00 323.0h2v2h-2zM477.00 352.0h2v2h-2zM493.00 352.0h2v2h-2zM501.00 352.0h2v2h-2zM563.00 79h2v2h-2zM571.00 79h2v2h-2zM587.00 79h2v2h-2zM595.00 79h2v2h-2zM603.00 79h2v2h-2zM611.00 79h2v2h-2zM619.00 79h2v2h-2zM675.00 79h2v2h-2zM691.00 79h2v2h-2zM563.00 92h2v2h-2zM571.00 92h2v2h-2zM587.00 92h2v2h-2zM595.00 92h2v2h-2zM603.00 92h2v2h-2zM611.00 92h2v2h-2zM619.00 92h2v2h-2zM675.00 92h2v2h-2zM571.00 105h2v2h-2zM579.00 105h2v2h-2zM587.00 105h2v2h-2zM595.00 105h2v2h-2zM603.00 105h2v2h-2zM611.00 105h2v2h-2zM619.00 105h2v2h-2zM675.00 105h2v2h-2zM579.00 118h2v2h-2zM587.00 118h2v2h-2zM595.00 118h2v2h-2zM603.00 118h2v2h-2zM611.00 118h2v2h-2zM619.00 118h2v2h-2zM571.00 131h2v2h-2zM579.00 131h2v2h-2zM587.00 131h2v2h-2zM595.00 131h2v2h-2zM603.00 131h2v2h-2zM611.00 131h2v2h-2zM619.00 131h2v2h-2zM563.00 144h2v2h-2zM579.00 144h2v2h-2zM587.00 144h2v2h-2zM595.00 144h2v2h-2zM603.00 144h2v2h-2zM611.00 144h2v2h-2zM619.00 144h2v2h-2zM563.00 157h2v2h-2zM579.00 157h2v2h-2zM587.00 157h2v2h-2zM595.00 157h2v2h-2zM603.00 157h2v2h-2zM611.00 157h2v2h-2zM619.00 157h2v2h-2zM675.00 157h2v2h-2zM699.00 157h2v2h-2zM603.00 170h2v2h-2zM250.00 371h2v2h-2zM258.00 371h2v2h-2zM266.00 371h2v2h-2zM61.00 397h2v2h-2zM69.00 397h2v2h-2zM85.00 397h2v2h-2zM93.00 397h2v2h-2zM101.00 397h2v2h-2zM109.00 397h2v2h-2zM117.00 397h2v2h-2zM181.00 397h2v2h-2zM61.00 410h2v2h-2zM69.00 410h2v2h-2zM85.00 410h2v2h-2zM93.00 410h2v2h-2zM101.00 410h2v2h-2zM109.00 410h2v2h-2zM117.00 410h2v2h-2zM181.00 410h2v2h-2zM205.00 410h2v2h-2zM69.00 423h2v2h-2zM77.00 423h2v2h-2zM85.00 423h2v2h-2zM93.00 423h2v2h-2zM101.00 423h2v2h-2zM109.00 423h2v2h-2zM117.00 423h2v2h-2zM205.00 423h2v2h-2zM293.00 423h2v2h-2zM301.00 423h2v2h-2zM365.00 423h2v2h-2zM77.00 436h2v2h-2zM85.00 436h2v2h-2zM93.00 436h2v2h-2zM101.00 436h2v2h-2zM109.00 436h2v2h-2zM117.00 436h2v2h-2zM277.00 436h2v2h-2zM69.00 449h2v2h-2zM77.00 449h2v2h-2zM85.00 449h2v2h-2zM93.00 449h2v2h-2zM101.00 449h2v2h-2zM109.00 449h2v2h-2zM117.00 449h2v2h-2zM373.00 449h2v2h-2zM389.00 449h2v2h-2zM61.00 462h2v2h-2zM77.00 462h2v2h-2zM85.00 462h2v2h-2zM93.00 462h2v2h-2zM101.00 462h2v2h-2zM109.00 462h2v2h-2zM117.00 462h2v2h-2zM277.00 462h2v2h-2zM293.00 462h2v2h-2zM61.00 475h2v2h-2zM77.00 475h2v2h-2zM85.00 475h2v2h-2zM93.00 475h2v2h-2zM101.00 475h2v2h-2zM109.00 475h2v2h-2zM117.00 475h2v2h-2zM381.00 475h2v2h-2zM101.00 488h2v2h-2zM181.00 488h2v2h-2zM373.00 488h2v2h-2zM584.00 371h2v2h-2zM592.00 371h2v2h-2zM608.00 371h2v2h-2zM680.00 371h2v2h-2zM696.00 371h2v2h-2zM704.00 371h2v2h-2zM712.00 371h2v2h-2zM485.00 389.0h2v2h-2zM493.00 389.0h2v2h-2zM501.00 389.0h2v2h-2zM469.00 417.0h2v2h-2zM477.00 417.0h2v2h-2zM493.00 417.0h2v2h-2zM469.00 445.0h2v2h-2zM477.00 445.0h2v2h-2zM493.00 445.0h2v2h-2zM469.00 473.0h2v2h-2zM477.00 473.0h2v2h-2zM493.00 473.0h2v2h-2zM469.00 501.0h2v2h-2zM477.00 501.0h2v2h-2zM493.00 501.0h2v2h-2zM469.00 530.0h2v2h-2zM477.00 530.0h2v2h-2zM493.00 530.0h2v2h-2zM469.00 558.0h2v2h-2zM477.00 558.0h2v2h-2zM493.00 558.0h2v2h-2zM469.00 586.0h2v2h-2zM477.00 586.0h2v2h-2zM493.00 586.0h2v2h-2zM469.00 614.0h2v2h-2zM477.00 614.0h2v2h-2zM493.00 614.0h2v2h-2zM469.00 642.0h2v2h-2zM477.00 642.0h2v2h-2zM493.00 642.0h2v2h-2zM469.00 671.0h2v2h-2zM485.00 671.0h2v2h-2zM493.00 671.0h2v2h-2zM501.00 671.0h2v2h-2zM563.00 397h2v2h-2zM571.00 397h2v2h-2zM587.00 397h2v2h-2zM595.00 397h2v2h-2zM603.00 397h2v2h-2zM611.00 397h2v2h-2zM619.00 397h2v2h-2zM563.00 410h2v2h-2zM571.00 410h2v2h-2zM587.00 410h2v2h-2zM595.00 410h2v2h-2zM603.00 410h2v2h-2zM611.00 410h2v2h-2zM619.00 410h2v2h-2zM571.00 423h2v2h-2zM579.00 423h2v2h-2zM587.00 423h2v2h-2zM595.00 423h2v2h-2zM603.00 423h2v2h-2zM611.00 423h2v2h-2zM619.00 423h2v2h-2zM579.00 436h2v2h-2zM587.00 436h2v2h-2zM595.00 436h2v2h-2zM603.00 436h2v2h-2zM611.00 436h2v2h-2zM619.00 436h2v2h-2zM571.00 449h2v2h-2zM579.00 449h2v2h-2zM587.00 449h2v2h-2zM595.00 449h2v2h-2zM603.00 449h2v2h-2zM611.00 449h2v2h-2zM619.00 449h2v2h-2zM563.00 462h2v2h-2zM579.00 462h2v2h-2zM587.00 462h2v2h-2zM595.00 462h2v2h-2zM603.00 462h2v2h-2zM611.00 462h2v2h-2zM619.00 462h2v2h-2zM563.00 475h2v2h-2zM579.00 475h2v2h-2zM587.00 475h2v2h-2zM595.00 475h2v2h-2zM603.00 475h2v2h-2zM611.00 475h2v2h-2zM619.00 475h2v2h-2zM707.00 475h2v2h-2zM603.00 488h2v2h-2z" fill="#000"/>
</g>
</svg>
<div class="abs" style="left:0px;top:684px;width:881px;height:1px;background:#f4f4f4;"></div><div class="abs" style="left:0px;top:685px;width:881px;height:1px;background:#dcdcdc;"></div><div class="abs" style="left:0px;top:686px;width:881px;height:16px;background:#bababa;"></div><div class="abs" style="left:0px;top:702px;width:881px;height:1px;background:#c4c4c4;"></div><div class="abs" style="left:0px;top:703px;width:886px;height:1px;background:#8c8c8c;"></div><div class="abs" style="left:0px;top:704px;width:1024px;height:1px;background:#000000;"></div><div class="abs" style="left:0px;top:705px;width:1024px;height:23px;background:#4c4c4c;"></div><div class="abs" style="left:0px;top:705px;width:1024px;height:1px;background:#5c5c5c;"></div><div class="abs" style="left:0px;top:705px;width:2px;height:23px;background:#8a8a8a;"></div><div class="abs" style="left:0px;top:727px;width:1024px;height:1px;background:#1e1e1e;"></div>
<div class="box" style="left:2px;top:686px;width:16px;height:16px;background:#d4d4d4;color:#000;font-size:12.4px;line-height:14px;border-top:1px solid #a0a0a0;border-left:1px solid #a0a0a0;border-bottom:1px solid #f0f0f0;border-right:1px solid #f0f0f0">1</div>
<div class="sb" style="left:21px;top:688px">Start 50 MHz</div>
<div class="sb" style="left:372px;top:688px">IFBW 70 kHz</div>
<div class="sb" style="left:722px;top:688px">Stop 20 GHz</div>
<div class="box" style="left:797px;top:687px;width:45px;height:14px;background:#3c3c8c;line-height:14px;font-size:13px">16/16</div>
<div class="box" style="left:844px;top:687px;width:25px;height:14px;background:#3c3c8c;line-height:14px;font-size:13px">Cor</div>
<div class="box" style="left:871px;top:686px;width:10px;height:16px;background:#d0d0d0;border-top:1px solid #a0a0a0;border-left:1px solid #a0a0a0"></div>
<div class="abs" style="left:886px;top:43px;width:137px;height:661px;background:#4c4c4c;border-right:1px solid #6a6a6a;border-bottom:1px solid #6a6a6a"></div>
<div class="btn nav" style="top:43px;height:34px;line-height:30px;padding-top:2px">S2P</div><div class="btn lt" style="top:78px;height:34px;line-height:30px;padding-top:1px">[ 1-2 ]...</div><div class="btn lt" style="top:113px;height:34px;line-height:30px;padding-top:1px">[ 1-3 ]...</div><div class="btn lt" style="top:148px;height:34px;line-height:30px;padding-top:1px">[ 1-4 ]...</div><div class="btn lt" style="top:183px;height:34px;line-height:30px;padding-top:1px">[ 2-3 ]...</div><div class="btn lt" style="top:218px;height:34px;line-height:30px;padding-top:1px">[ 2-4 ]...</div><div class="btn dk" style="top:252px;height:33px;line-height:29px;padding-top:1px">[ 3-4 ]...</div><div class="abs" style="left:886px;top:286px;width:136px;height:3px;background:#2a2a6a;border-top:1px solid #5a5aa0"></div><div class="btn lt" style="top:290px;height:32px;line-height:28px;padding-top:1px">Return</div>
<div class="abs" style="left:1023px;top:43px;width:1px;height:685px;background:#101010;"></div>
<div class="box" style="left:704px;top:707px;width:48px;height:18px;background:#3c3c8c;line-height:16px;font-size:16.5px;border-top:1px solid #202020;border-left:1px solid #202020;border-bottom:1px solid #8a8a8a">Hold</div>
<div class="box" style="left:753px;top:707px;width:40px;height:18px;background:#464646;border-top:1px solid #303030;border-left:1px solid #303030;border-bottom:1px solid #6a6a6a;border-right:1px solid #6a6a6a;color:#7c7c7c;line-height:16px;font-size:16.5px">Stop</div>
<div class="box" style="left:794px;top:707px;width:53px;height:18px;background:#464646;border-top:1px solid #303030;border-left:1px solid #303030;border-bottom:1px solid #6a6a6a;border-right:1px solid #6a6a6a;color:#7c7c7c;line-height:16px;font-size:16.5px">ExtRef</div>
<div class="box" style="left:848px;top:707px;width:32px;height:18px;background:#464646;border-top:1px solid #303030;border-left:1px solid #303030;border-bottom:1px solid #6a6a6a;border-right:1px solid #6a6a6a;color:#7c7c7c;line-height:16px;font-size:16.5px">Svc</div>
<div class="box" style="left:881px;top:707px;width:140px;height:18px;background:#424242;border-top:1px solid #202020;border-left:1px solid #202020;border-bottom:1px solid #8a8a8a;border-right:1px solid #8a8a8a;line-height:17px;font-size:16.6px">2021-12-24 15:16</div>
</body></html>
